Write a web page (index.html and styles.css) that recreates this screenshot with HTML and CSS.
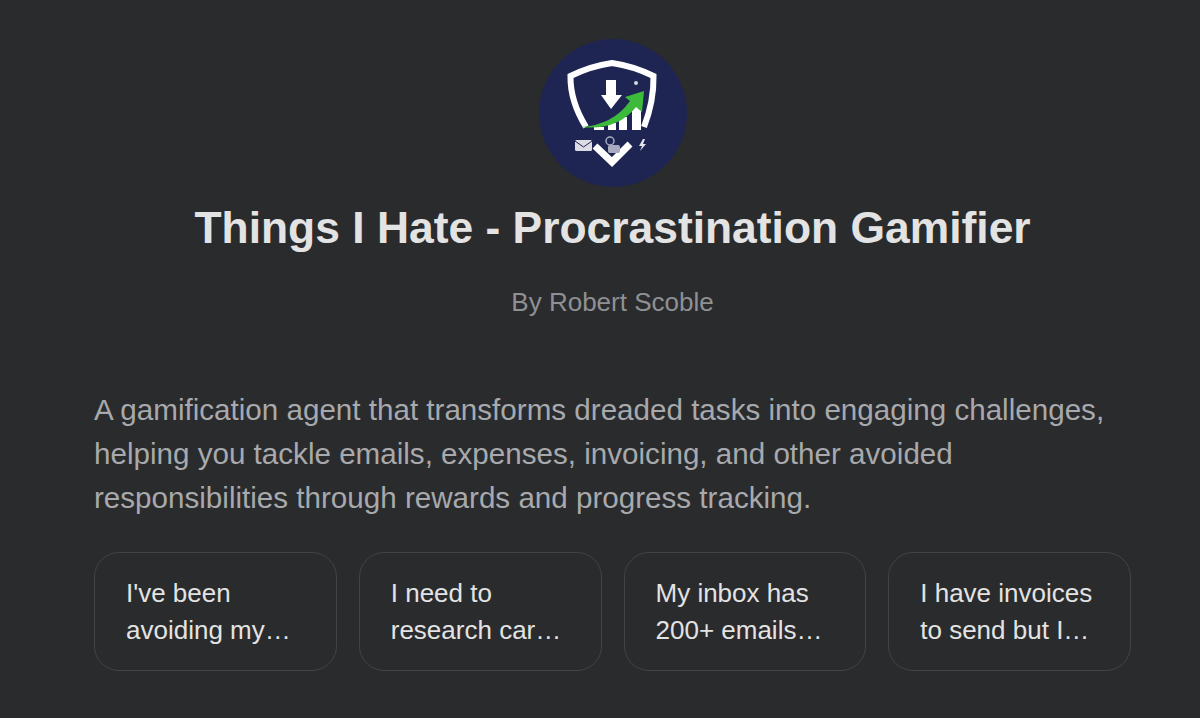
FILE: index.html
```html
<!doctype html>
<html lang="en">
<head>
    <meta charset="UTF-8">
    <title>Things I Hate - Procrastination Gamifier</title>
    <link rel="stylesheet" href="styles.css">
</head>
<body>
  <div class="wrap">
    <div class="head">
      <svg class="logo" viewBox="0 0 148 148" width="148" height="148">
        <circle cx="74" cy="74" r="74" fill="#1f2552"/>
        <path d="M47 88 Q31 62 31.500 37 Q52 27 73 24 Q94 27 114.500 37 Q115 62 105 88" fill="none" stroke="#fff" stroke-width="6"/>
        <path d="M56 107 L73 123 L91 105" fill="none" stroke="#fff" stroke-width="7"/>
        <path d="M67 41 H77 V56 H83 L72 70 L62 56 H67Z" fill="#fff"/>
        <path d="M55 88h10v3h-10zM69 84h8v7h-8zM80 78h8v13h-8zM93 65h9v26h-9z" fill="#fff"/>
        <path d="M42 88 Q74 86 91 62 L86 58 L105 52 L103 73 L97 68 Q78 92 42 88Z" fill="#3cba3c"/>
        <circle cx="97" cy="44" r="2" fill="#d5d7e2"/>
        <rect x="36" y="101" width="17" height="11" rx="1.500" fill="#dcdde4"/>
        <path d="M36 102 L44.500 108 L53 102" fill="none" stroke="#1f2552" stroke-width="1"/>
        <circle cx="71" cy="102" r="4" fill="none" stroke="#a9acc0" stroke-width="1.500"/>
        <rect x="69" y="106" width="12" height="8" rx="2" fill="#a9acc0"/>
        <path d="M104 100 L100 107 H103 L101 112 L107 105 H104 L106 100Z" fill="#e4e5ec"/>
      </svg>
      <h1 class="title">Things I Hate - Procrastination Gamifier</h1>
      <div class="byline">By Robert Scoble</div>
    </div>
    <p class="desc">A gamification agent that transforms dreaded tasks into engaging challenges, helping you tackle emails, expenses, invoicing, and other avoided responsibilities through rewards and progress tracking.</p>
    <div class="cards">
      <div class="card">I've been avoiding my…</div>
      <div class="card">I need to research car…</div>
      <div class="card">My inbox has 200+ emails…</div>
      <div class="card">I have invoices to send but I…</div>
    </div>
  </div>
</body>
</html>
```

FILE: styles.css
```css
* {
  margin: 0;
  padding: 0;
  box-sizing: border-box;
}
html, body {
  height: 100%;
}
body {
  background: #2a2b2d;
  font-family: "Liberation Sans", Arial, sans-serif;
  overflow: hidden;
}
.wrap {
  padding: 39px 69px 0 94px;
}
.head {
  display: flex;
  flex-direction: column;
  align-items: center;
}
.logo {
  display: block;
  filter: blur(.4px);
}
.title {
  margin-top: 13px;
  font-size: 44.400px;
  line-height: 56px;
  font-weight: 700;
  color: #e3e3e3;
}
.byline {
  margin-top: 30px;
  font-size: 26px;
  line-height: 32px;
  color: #8f9094;
}
.desc {
  margin-top: 70px;
  font-size: 29.600px;
  line-height: 44px;
  color: #a8a9ac;
}
.cards {
  display: grid;
  grid-template-columns: repeat(4, 1fr);
  gap: 22px;
  margin-top: 32px;
}
.card {
  height: 119px;
  padding: 22px 30px 22px 31px;
  border: 1.500px solid #424346;
  border-radius: 25px;
  font-size: 26px;
  line-height: 37px;
  color: #e3e3e3;
}
```
